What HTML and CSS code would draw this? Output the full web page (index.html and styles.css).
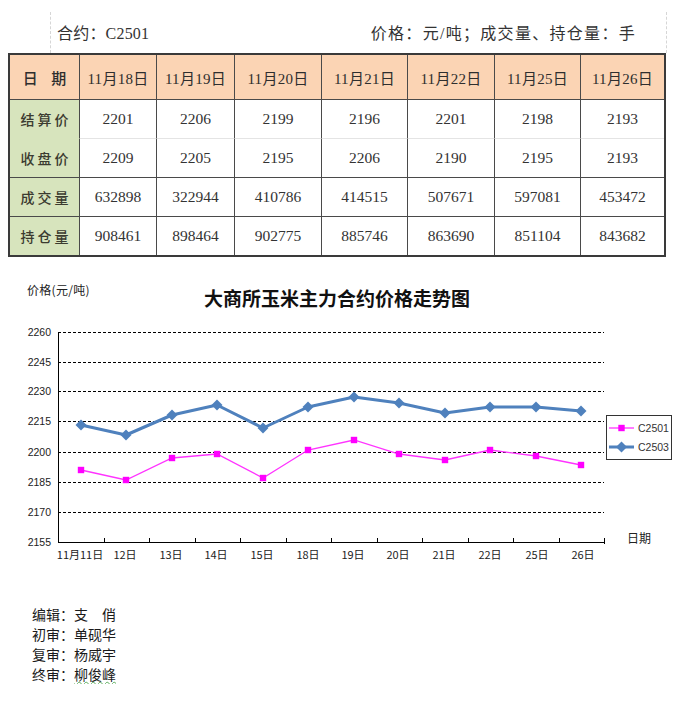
FILE: index.html
```html
<!DOCTYPE html>
<html lang="zh-CN">
<head>
<meta charset="utf-8">
<title>大商所玉米主力合约价格走势</title>
<link rel="stylesheet" href="styles.css">
</head>
<body>
<div class="caption">
  <span class="contract">合约：C2501</span>
  <span class="unit">价格：元/吨；成交量、持仓量：手</span>
</div>
<table class="quote">
  <colgroup>
    <col class="c-label"><col class="c2"><col class="c3"><col class="c4"><col class="c5"><col class="c6"><col class="c7"><col class="c8">
  </colgroup>
  <tr class="head">
    <th class="label">日&nbsp;期</th><th>11月18日</th><th>11月19日</th><th>11月20日</th><th>11月21日</th><th>11月22日</th><th>11月25日</th><th>11月26日</th>
  </tr>
  <tr class="r1">
    <th class="label">结算价</th><td>2201</td><td>2206</td><td>2199</td><td>2196</td><td>2201</td><td>2198</td><td>2193</td>
  </tr>
  <tr>
    <th class="label">收盘价</th><td>2209</td><td>2205</td><td>2195</td><td>2206</td><td>2190</td><td>2195</td><td>2193</td>
  </tr>
  <tr>
    <th class="label">成交量</th><td>632898</td><td>322944</td><td>410786</td><td>414515</td><td>507671</td><td>597081</td><td>453472</td>
  </tr>
  <tr class="last">
    <th class="label">持仓量</th><td>908461</td><td>898464</td><td>902775</td><td>885746</td><td>863690</td><td>851104</td><td>843682</td>
  </tr>
</table>

<svg class="chart" viewBox="0 256 685 334" width="685" height="334" xmlns="http://www.w3.org/2000/svg">
  <defs>
    <marker id="dia" viewBox="-6 -6 12 12" markerWidth="12" markerHeight="12" refX="0" refY="0" markerUnits="userSpaceOnUse">
      <path d="M0 -5.5 L5.5 0 L0 5.5 L-5.5 0 Z" fill="#4F81BD"/>
    </marker>
    <marker id="sq" viewBox="-4 -4 8 8" markerWidth="8" markerHeight="8" refX="0" refY="0" markerUnits="userSpaceOnUse">
      <rect x="-3.2" y="-3.2" width="6.4" height="6.4" fill="#FF00FF"/>
    </marker>
  </defs>

  <text class="ylabel-title" x="27" y="294">价格(元/吨)</text>
  <text class="title" x="337" y="305" text-anchor="middle">大商所玉米主力合约价格走势图</text>

  <g class="grid">
    <line x1="58" y1="331.5" x2="604" y2="331.5"/>
    <line x1="58" y1="361.5" x2="604" y2="361.5"/>
    <line x1="58" y1="390.5" x2="604" y2="390.5"/>
    <line x1="58" y1="420.5" x2="604" y2="420.5"/>
    <line x1="58" y1="451.5" x2="604" y2="451.5"/>
    <line x1="58" y1="481.5" x2="604" y2="481.5"/>
    <line x1="58" y1="511.5" x2="604" y2="511.5"/>
  </g>

  <g class="ytick" text-anchor="end">
    <text x="51" y="335">2260</text>
    <text x="51" y="365">2245</text>
    <text x="51" y="394">2230</text>
    <text x="51" y="424">2215</text>
    <text x="51" y="455">2200</text>
    <text x="51" y="485">2185</text>
    <text x="51" y="515">2170</text>
    <text x="51" y="545">2155</text>
  </g>

  <g class="axis">
    <line x1="58.5" y1="331" x2="58.5" y2="541.5"/>
    <line x1="58" y1="541.5" x2="604.5" y2="541.5"/>
    <path d="M104.5 537V541 M149.5 537V541 M195.5 537V541 M240.5 537V541 M286.5 537V541 M331.5 537V541 M377.5 537V541 M422.5 537V541 M468.5 537V541 M513.5 537V541 M559.5 537V541 M604.5 537V543"/>
  </g>

  <g class="xtick" text-anchor="middle">
    <text x="80" y="558">11月11日</text>
    <text x="125" y="558">12日</text>
    <text x="171" y="558">13日</text>
    <text x="216" y="558">14日</text>
    <text x="262" y="558">15日</text>
    <text x="308" y="558">18日</text>
    <text x="353" y="558">19日</text>
    <text x="398" y="558">20日</text>
    <text x="444" y="558">21日</text>
    <text x="490" y="558">22日</text>
    <text x="537" y="558">25日</text>
    <text x="583" y="558">26日</text>
  </g>
  <text class="xname" x="627" y="542">日期</text>

  <polyline class="s2503" points="81,424 126,434 172,414 217,404 263,427 308,406 354,396 399,402 445,412 490,406 536,406 581,410"/>
  <polyline class="s2501" points="81,469 126,479 172,457 217,453 263,477 308,449 354,439 399,453 445,459 490,449 536,455 581,464"/>

  <g class="legend">
    <rect x="606.5" y="414.5" width="65" height="44"/>
    <polyline class="s2501" points="609,427 621.5,427 634,427"/>
    <text x="638" y="431">C2501</text>
    <polyline class="s2503" points="609,446 621.5,446 634,446"/>
    <text x="638" y="450">C2503</text>
  </g>
</svg>

<div class="credits">
  <p>编辑：支　俏</p>
  <p>初审：单砚华</p>
  <p>复审：杨威宇</p>
  <p>终审：<span class="squiggle">柳俊峰</span></p>
</div>
</body>
</html>
```

FILE: styles.css
```css
* {
  box-sizing: border-box;
}

html, body {
  margin: 0;
  padding: 0;
  background: #ffffff;
}

body {
  width: 685px;
  font-family: "Liberation Serif", "Noto Sans CJK SC", serif;
  color: #333333;
}

.caption {
  margin: 12px 0 0 50px;
  width: 617px;
  height: 41px;
  border-left: 1px dashed #d6d6d6;
  border-right: 1px dashed #d6d6d6;
  display: flex;
  align-items: center;
  justify-content: space-between;
  padding: 0 30px 2px 6px;
  font-size: 16px;
  color: #333333;
}

.caption .contract {
  letter-spacing: 0.2px;
}

.caption .unit {
  letter-spacing: 1.3px;
}

.quote {
  margin-left: 8px;
  width: 658px;
  table-layout: fixed;
  border-collapse: separate;
  border-spacing: 0;
  border: 2px solid #3a3a3a;
}

.quote .c-label { width: 70px; }
.quote .c2 { width: 77px; }
.quote .c3 { width: 78px; }
.quote .c4 { width: 87px; }
.quote .c5 { width: 86px; }
.quote .c6 { width: 87px; }
.quote .c7 { width: 86px; }
.quote .c8 { width: 83px; }

.quote th,
.quote td {
  padding: 0;
  text-align: center;
  vertical-align: middle;
  border-right: 1px solid #4a4a4a;
  border-bottom: 1px solid #4a4a4a;
  height: 39px;
  font-weight: normal;
}

.quote th:last-child,
.quote td:last-child {
  border-right: 0;
}

.quote tr.last th,
.quote tr.last td {
  border-bottom: 0;
  height: 38px;
}

.quote tr.head th {
  background: #FBD4B4;
  height: 45px;
  font-size: 15px;
  letter-spacing: 0.3px;
  color: #2e2e2e;
}

.quote tr.head th.label {
  letter-spacing: 5px;
  padding-left: 5px;
}

.quote th.label {
  background: #D7E4BD;
  font-family: "Noto Sans CJK SC", sans-serif;
  font-size: 14px;
  font-weight: 500;
  letter-spacing: 3px;
  padding-left: 3px;
  color: #3b3b30;
}

.quote tr.r1 td {
  border-bottom-color: #e4e4e4;
}

.quote tr.r1 th.label {
  border-bottom-color: #D7E4BD;
}

.quote td {
  font-size: 15.5px;
  color: #333333;
}

.chart {
  display: block;
}

.chart text {
  font-family: "Noto Sans CJK SC", sans-serif;
  fill: #222222;
}

.chart .ylabel-title {
  font-size: 12px;
  letter-spacing: 0.3px;
}

.chart .title {
  font-size: 19px;
  font-weight: 700;
  fill: #111111;
}

.chart .grid line {
  stroke: #000000;
  stroke-width: 1;
  stroke-dasharray: 3 2;
}

.chart .ytick text {
  font-family: "Liberation Sans", sans-serif;
  font-size: 10.5px;
}

.chart .axis line,
.chart .axis path {
  stroke: #000000;
  stroke-width: 1;
  fill: none;
}

.chart .xtick text {
  font-size: 11px;
}

.chart .xname {
  font-size: 12px;
}

.chart .s2503 {
  fill: none;
  stroke: #4F81BD;
  stroke-width: 3;
  stroke-linejoin: round;
  marker-start: url(#dia);
  marker-mid: url(#dia);
  marker-end: url(#dia);
}

.chart .s2501 {
  fill: none;
  stroke: #FF33FF;
  stroke-width: 1.3;
  marker-start: url(#sq);
  marker-mid: url(#sq);
  marker-end: url(#sq);
}

.chart .legend rect {
  fill: #ffffff;
  stroke: #333333;
  stroke-width: 1;
}

.chart .legend .s2501,
.chart .legend .s2503 {
  marker-start: none;
  marker-end: none;
}

.chart .legend text {
  font-family: "Liberation Sans", sans-serif;
  font-size: 10.5px;
  fill: #333333;
}

.credits {
  margin-top: 13px;
  padding-left: 32px;
  font-family: "Noto Sans CJK SC", sans-serif;
  font-size: 14px;
  color: #1a1a1a;
}

.credits p {
  margin: 0;
  line-height: 20px;
}

.squiggle {
  text-decoration-line: underline;
  text-decoration-style: wavy;
  text-decoration-color: #5fae5f;
  text-decoration-thickness: 1px;
  text-underline-offset: 1px;
}
```
